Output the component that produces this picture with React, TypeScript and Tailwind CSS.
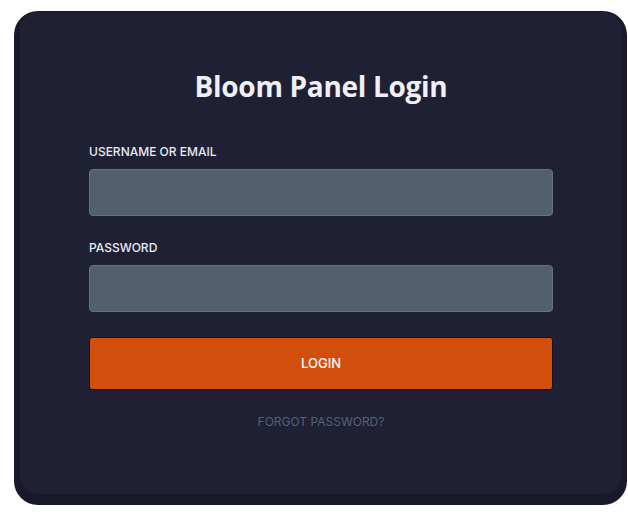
export default function App() {
  return (
    <div
      className="w-[628px] h-[524px] bg-white pt-[12px] pl-[20px]"
      style={{ fontFamily: '"Open Sans", "Liberation Sans", sans-serif' }}
    >
      <div className="w-[601px] h-[482px] bg-[#1f2034] rounded-[18px] shadow-[0_5px_0_6px_#18192a] pl-[69px] pr-[68px] pt-[57px]">
        <h1 className="text-center text-[28px] leading-[34px] font-bold text-[#eef0f5] tracking-[-0.3px]">
          Bloom Panel Login
        </h1>

        <form
          className="mt-[41px] flex flex-col font-['Inter',sans-serif]"
          onSubmit={(e) => e.preventDefault()}
        >
          <label className="text-[12px] leading-[16px] font-medium text-[#e8ebf2] mb-[9px]">
            USERNAME OR EMAIL
          </label>
          <input className="h-[47px] w-full rounded-[4px] bg-[#52606e] border border-[#66737f] outline-none" />

          <label className="text-[12px] leading-[16px] font-medium text-[#e8ebf2] mt-[24px] mb-[9px]">
            PASSWORD
          </label>
          <input
            type="password"
            className="h-[47px] w-full rounded-[4px] bg-[#52606e] border border-[#66737f] outline-none"
          />

          <button className="mt-[25px] h-[53px] w-full rounded-[3px] bg-[#d24e0d] border border-[#1b1410] text-white text-[13px] font-medium">
            LOGIN
          </button>

          <a className="mt-[24px] text-center text-[12px] leading-[16px] text-[#54627a]">
            FORGOT PASSWORD?
          </a>
        </form>
      </div>
    </div>
  )
}
